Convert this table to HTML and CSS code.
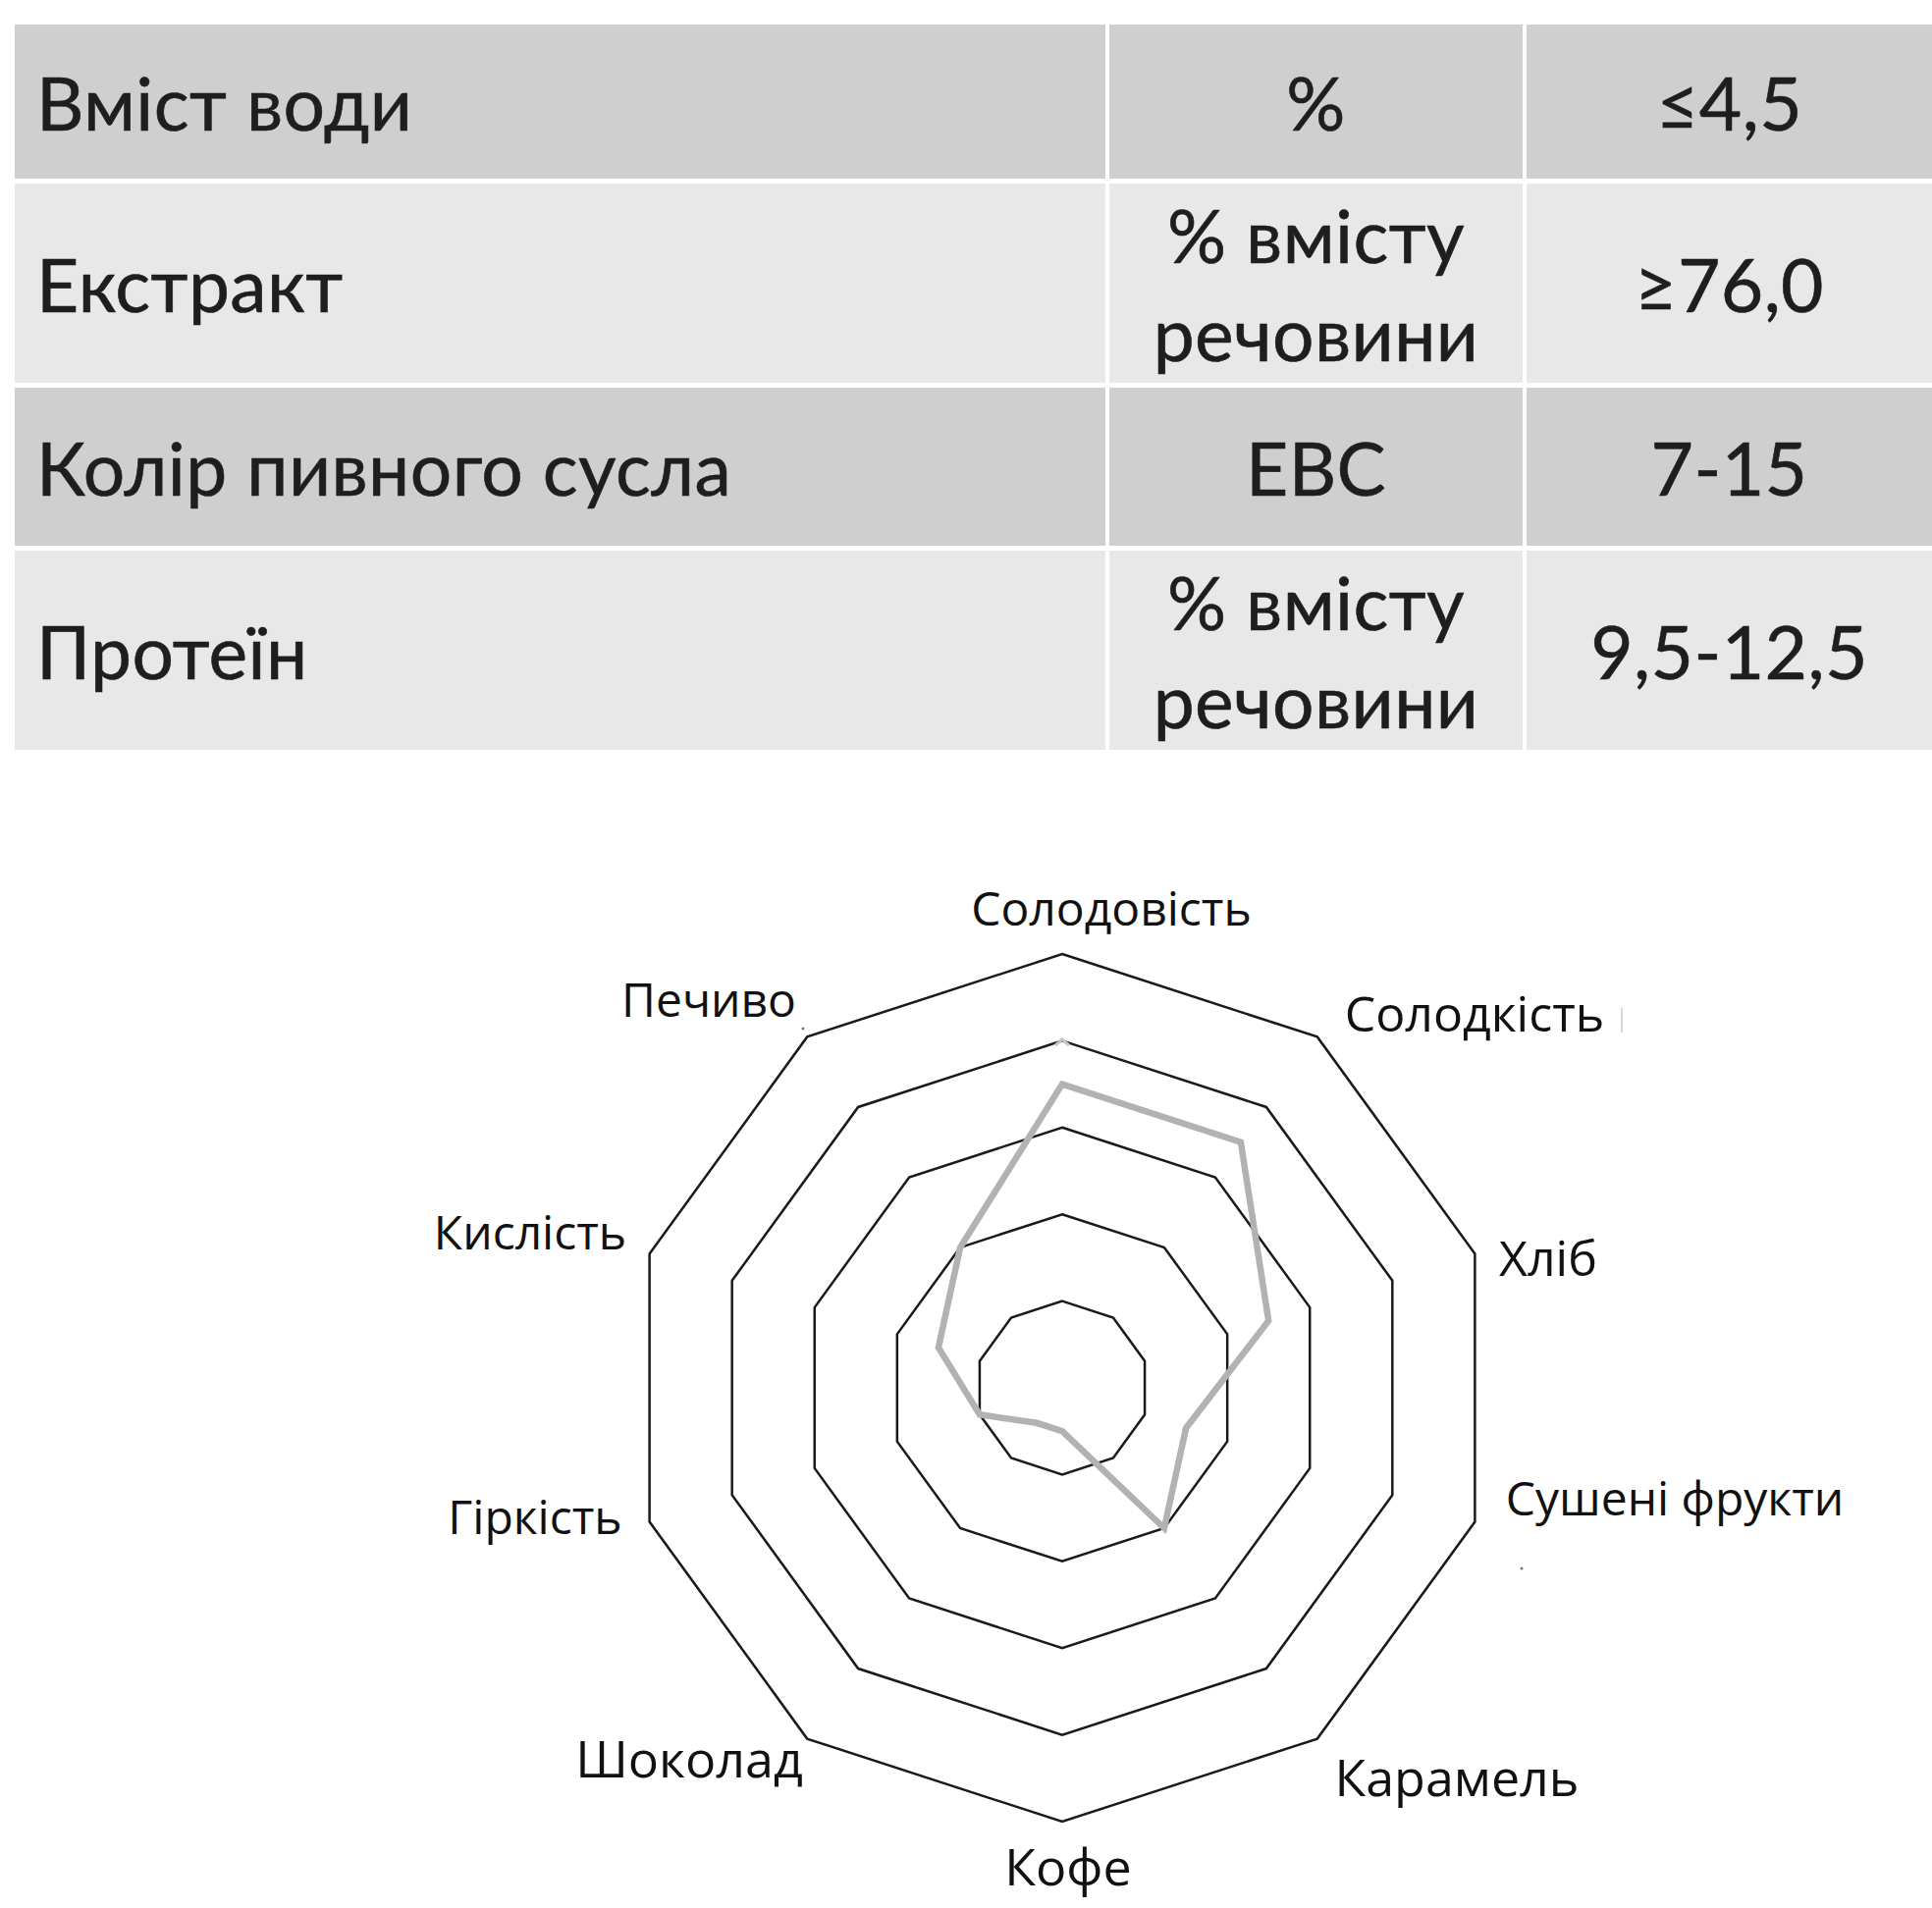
FILE: index.html
```html
<!DOCTYPE html>
<html lang="uk">
<head>
<meta charset="utf-8">
<title>Характеристики солоду</title>
<link rel="stylesheet" href="styles.css">
</head>
<body>
<div class="spec">
  <div class="cell c1 odd">Вміст води</div>
  <div class="cell c2 odd">%</div>
  <div class="cell c3 odd">≤4,5</div>

  <div class="cell c1 even">Екстракт</div>
  <div class="cell c2 even">% вмісту<br>речовини</div>
  <div class="cell c3 even">≥76,0</div>

  <div class="cell c1 odd">Колір пивного сусла</div>
  <div class="cell c2 odd">EBC</div>
  <div class="cell c3 odd">7-15</div>

  <div class="cell c1 even">Протеїн</div>
  <div class="cell c2 even">% вмісту<br>речовини</div>
  <div class="cell c3 even">9,5-12,5</div>
</div>

<svg class="chart" width="1968" height="1180" viewBox="0 764 1968 1180" xmlns="http://www.w3.org/2000/svg">
  <g transform="translate(1082 1414)">
    <polygon class="ring" transform="scale(442)" points="0,-1 0.5878,-0.809 0.9511,-0.309 0.9511,0.309 0.5878,0.809 0,1 -0.5878,0.809 -0.9511,0.309 -0.9511,-0.309 -0.5878,-0.809"/>
    <polygon class="ring" transform="scale(353.6)" points="0,-1 0.5878,-0.809 0.9511,-0.309 0.9511,0.309 0.5878,0.809 0,1 -0.5878,0.809 -0.9511,0.309 -0.9511,-0.309 -0.5878,-0.809"/>
    <polygon class="ring" transform="scale(265.2)" points="0,-1 0.5878,-0.809 0.9511,-0.309 0.9511,0.309 0.5878,0.809 0,1 -0.5878,0.809 -0.9511,0.309 -0.9511,-0.309 -0.5878,-0.809"/>
    <polygon class="ring" transform="scale(176.8)" points="0,-1 0.5878,-0.809 0.9511,-0.309 0.9511,0.309 0.5878,0.809 0,1 -0.5878,0.809 -0.9511,0.309 -0.9511,-0.309 -0.5878,-0.809"/>
    <polygon class="ring" transform="scale(88.4)" points="0,-1 0.5878,-0.809 0.9511,-0.309 0.9511,0.309 0.5878,0.809 0,1 -0.5878,0.809 -0.9511,0.309 -0.9511,-0.309 -0.5878,-0.809"/>
    <polyline class="blip" points="-7,-349 0,-355 7,-349"/>
    <polygon class="data" points="0,-309.4 181.9,-250.3 210.2,-68.3 126.1,41 103.9,143 0,44.2 -26,35.8 -84.1,27.3 -126.1,-41 -103.9,-143"/>
  </g>
  <line class="tick" x1="1652" y1="1027" x2="1652" y2="1052"/>
  <circle class="dot" cx="818" cy="1048" r="1.5"/>
  <circle class="dot" cx="1550" cy="1598" r="1.5"/>

  <text class="lbl" x="1132" y="943">Солодовість</text>
  <text class="lbl" x="722" y="1036">Печиво</text>
  <text class="lbl lbl-m" x="1502" y="1051">Солодкість</text>
  <text class="lbl lbl-m" x="1577" y="1300">Хліб</text>
  <text class="lbl" x="1706" y="1544">Сушені фрукти</text>
  <text class="lbl lbl-l" x="1484" y="1830">Карамель</text>
  <text class="lbl lbl-l" x="1088" y="1921">Кофе</text>
  <text class="lbl lbl-l" x="702" y="1811">Шоколад</text>
  <text class="lbl" x="545" y="1563">Гіркість</text>
  <text class="lbl" x="540" y="1273">Кислість</text>
</svg>
</body>
</html>
```

FILE: styles.css
```css
html, body {
  margin: 0;
  padding: 0;
  background: #ffffff;
}

body {
  width: 1968px;
  overflow: hidden;
}

.spec {
  display: grid;
  grid-template-columns: 1111px 421px 413px;
  grid-template-rows: 157px 203px 161px 203px;
  column-gap: 4px;
  row-gap: 5px;
  margin: 25px 0 0 15px;
}

.cell {
  display: flex;
  align-items: center;
  font-family: Lato, "Noto Sans", sans-serif;
  font-size: 75px;
  line-height: 100px;
  letter-spacing: 0.4px;
  color: #1e1e1e;
  -webkit-text-stroke: 0.6px #1e1e1e;
}

.odd {
  background: #cfcfcf;
}

.even {
  background: #e8e8e8;
}

.c1 {
  padding-left: 22px;
}

.c2,
.c3 {
  justify-content: center;
  text-align: center;
}

.chart {
  display: block;
}

.ring {
  fill: none;
  stroke: #1a1a1a;
  stroke-width: 2.5;
  vector-effect: non-scaling-stroke;
}

.data {
  fill: none;
  stroke: #b2b2b2;
  stroke-width: 6.5;
  stroke-linejoin: miter;
}

.blip {
  fill: none;
  stroke: #c4c4c4;
  stroke-width: 3;
}

.tick {
  stroke: #d6d6d6;
  stroke-width: 2;
}

.dot {
  fill: #777777;
}

.lbl {
  font-family: "Open Sans", "Noto Sans", sans-serif;
  font-size: 48px;
  fill: #111111;
  text-anchor: middle;
}

.lbl-m {
  font-size: 50px;
}

.lbl-l {
  font-size: 52px;
}
```
